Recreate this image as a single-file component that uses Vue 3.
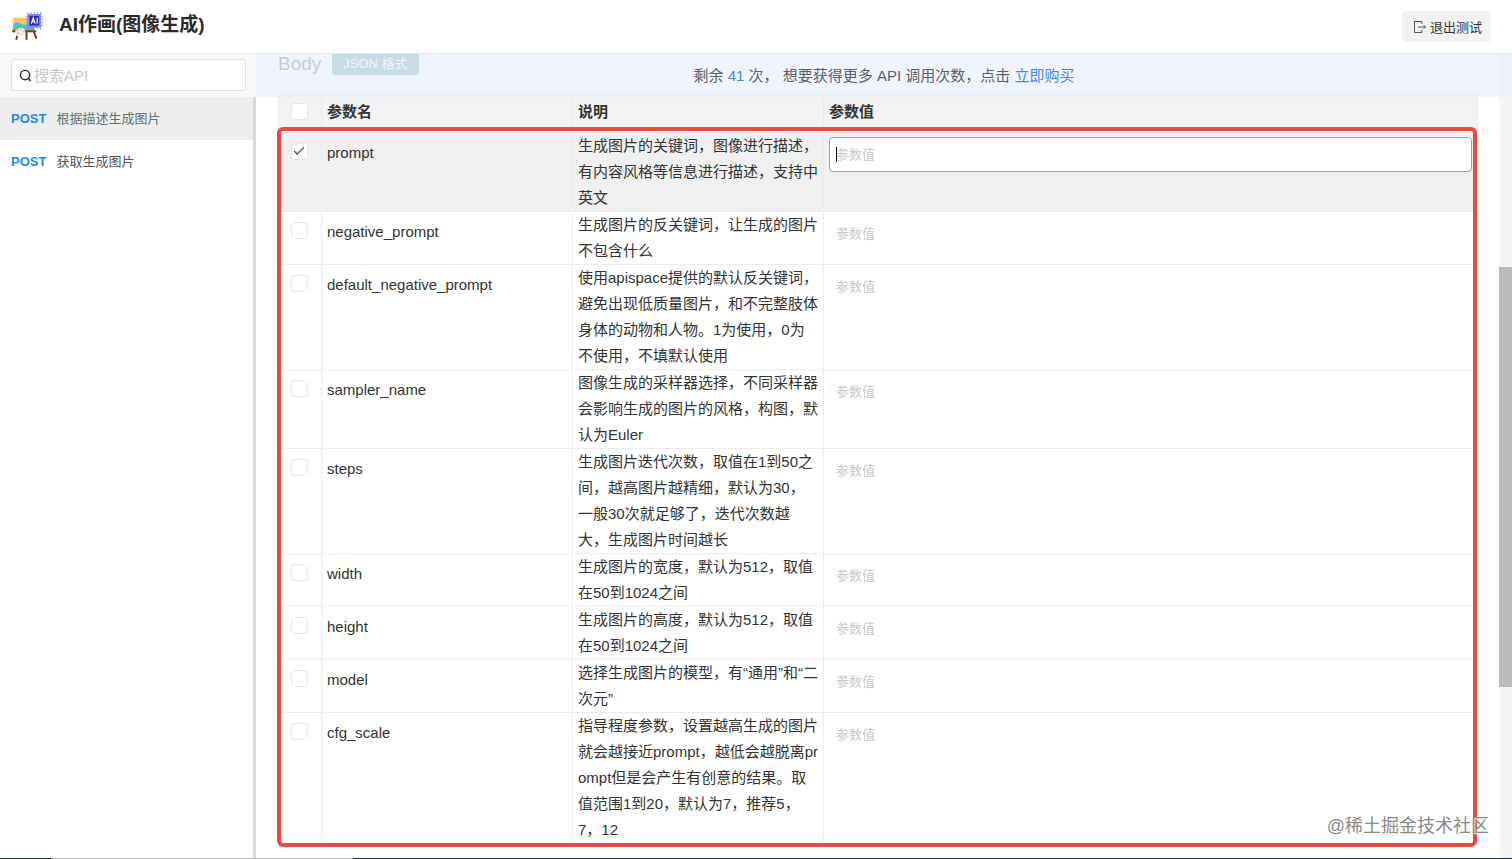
<script setup>
import { ref } from 'vue'

const keyword = ref('')

const apis = [
  { method: 'POST', name: '根据描述生成图片', active: true },
  { method: 'POST', name: '获取生成图片', active: false },
]

const params = ref([
  { name: 'prompt', desc: '生成图片的关键词，图像进行描述，有内容风格等信息进行描述，支持中英文', checked: true, value: '' },
  { name: 'negative_prompt', desc: '生成图片的反关键词，让生成的图片不包含什么', checked: false, value: '' },
  { name: 'default_negative_prompt', desc: '使用apispace提供的默认反关键词，避免出现低质量图片，和不完整肢体身体的动物和人物。1为使用，0为不使用，不填默认使用', checked: false, value: '' },
  { name: 'sampler_name', desc: '图像生成的采样器选择，不同采样器会影响生成的图片的风格，构图，默认为Euler', checked: false, value: '' },
  { name: 'steps', desc: '生成图片迭代次数，取值在1到50之间，越高图片越精细，默认为30，一般30次就足够了，迭代次数越大，生成图片时间越长', checked: false, value: '' },
  { name: 'width', desc: '生成图片的宽度，默认为512，取值在50到1024之间', checked: false, value: '' },
  { name: 'height', desc: '生成图片的高度，默认为512，取值在50到1024之间', checked: false, value: '' },
  { name: 'model', desc: '选择生成图片的模型，有“通用”和“二次元”', checked: false, value: '' },
  { name: 'cfg_scale', desc: '指导程度参数，设置越高生成的图片就会越接近prompt，越低会越脱离prompt但是会产生有创意的结果。取值范围1到20，默认为7，推荐5，7，12', checked: false, value: '' },
])
</script>

<template>
  <div class="app">
    <header class="topbar">
      <svg class="logo" viewBox="0 0 32 30" aria-hidden="true">
        <path d="M7 19 4.500 28M22 19l3 8M15 19v9" stroke="#713a25" stroke-width="2" stroke-linecap="round" />
        <rect x="1" y="6" width="22" height="14" fill="#ffc65c" />
        <path d="M1 13q4-4 8-1t8-1l6-1v10H1z" fill="#4fb9e8" />
        <path d="M1 17q5-3 10 0t12-2v5H1z" fill="#79bf4d" />
        <rect x="0" y="19" width="25" height="2" fill="#713a25" />
        <path d="M16.500 0v18M20 0v18M23 0v18M26 0v18M29.500 0v18M14 5h18M14 8h18M14 11h18M14 14h18" stroke="#8d98ea" stroke-width="1" />
        <rect x="16" y="2" width="14" height="14" rx="1" fill="#7c8bec" />
        <rect x="18" y="4" width="10" height="10" fill="#3030a5" />
        <path d="M20 12l2-6 2 6M20.500 10h3M26 6v6" fill="none" stroke="#fff" stroke-width="1.200" />
        <path d="M4 19q3-4 8-2 3 3 1 6-2 2-4 0l-1 2q-3 1-4-2-2-1 0-4z" fill="#f4eae7" />
        <circle cx="6" cy="19" r="0.800" fill="#e9a096" />
        <circle cx="9" cy="18" r="0.800" fill="#8fb8da" />
        <circle cx="12" cy="20" r="0.800" fill="#eab04e" />
        <circle cx="6" cy="22" r="0.800" fill="#a89bb0" />
      </svg>
      <h1>AI作画(图像生成)</h1>
      <button class="exit" type="button">
        <svg viewBox="0 0 14 14" aria-hidden="true">
          <path d="M9 4V1.500H1.500v11H9V10M5 7h7.500M10.500 5l2 2-2 2" />
        </svg>
        退出测试
      </button>
    </header>

    <div class="workspace">
      <aside class="sidebar">
        <label class="search">
          <svg viewBox="0 0 14 14" aria-hidden="true">
            <circle cx="6.500" cy="6.500" r="5" />
            <path d="m10 10 2.500 3" />
          </svg>
          <input v-model="keyword" type="text" placeholder="搜索API" aria-label="搜索API" />
        </label>
        <nav>
          <a v-for="api in apis" :key="api.name" href="#" :class="{ active: api.active }">
            <b>{{ api.method }}</b>{{ api.name }}
          </a>
        </nav>
      </aside>

      <main class="main">
        <div class="content">
          <div class="body-head">
            <h2>Body</h2>
            <span class="tag">JSON 格式</span>
          </div>
          <div class="table-wrap">
            <table>
              <colgroup>
                <col class="c-check" />
                <col class="c-text" />
                <col class="c-text" />
                <col />
              </colgroup>
              <thead>
                <tr>
                  <th class="check"><input type="checkbox" aria-label="全选" /></th>
                  <th>参数名</th>
                  <th>说明</th>
                  <th>参数值</th>
                </tr>
              </thead>
              <tbody>
                <tr v-for="(p, i) in params" :key="p.name" :class="{ current: i === 0 }">
                  <td class="check"><input :id="'check-' + p.name" v-model="p.checked" type="checkbox" :aria-label="p.name" /></td>
                  <td class="name"><label :for="'check-' + p.name">{{ p.name }}</label></td>
                  <td class="desc">{{ p.desc }}</td>
                  <td class="value">
                    <input v-model="p.value" type="text" placeholder="参数值" :aria-label="p.name + ' 参数值'" />
                    <i v-if="i === 0" class="caret"></i>
                  </td>
                </tr>
              </tbody>
            </table>
            <div class="highlight"></div>
          </div>
        </div>
        <div class="scrollbar"><span></span></div>
        <p class="quota">
          剩余 <em>41</em> 次，&nbsp;想要获得更多 API 调用次数，点击 <a href="#">立即购买</a>
        </p>
        <span class="watermark">@稀土掘金技术社区</span>
      </main>
    </div>
    <footer class="edge"><span></span></footer>
  </div>
</template>

<style>
body {
  margin: 0;
  background: #fff;
}
</style>

<style scoped>
.app {
  display: flex;
  flex-direction: column;
  height: 100vh;
  overflow: hidden;
  color: #333;
  background: #fff;
  font: 15px/26px "Liberation Sans", "Noto Sans CJK SC", sans-serif;
}

.app *,
.app *::before {
  box-sizing: border-box;
}

input,
button {
  font-family: inherit;
}

a {
  text-decoration: none;
}

.topbar {
  display: flex;
  flex: none;
  align-items: center;
  height: 54px;
  padding: 0 21px 0 12px;
  border-bottom: 1px solid #e8e8ea;
}

.logo {
  width: 31px;
  height: 29px;
  fill: none;
}

h1 {
  margin: 0 0 3px 16px;
  color: #2b2b2b;
  font-size: 19px;
  line-height: 28px;
}

.exit {
  display: flex;
  align-items: center;
  gap: 3px;
  height: 31px;
  margin-left: auto;
  padding: 0 9px 0 11px;
  border: 0;
  border-radius: 4px;
  background: #f2f2f2;
  color: #333;
  font-size: 13px;
}

.exit svg {
  width: 14px;
  height: 14px;
  fill: none;
  stroke: #555;
}

.workspace {
  display: flex;
  flex: 1;
  min-height: 0;
}

.sidebar {
  flex: none;
  width: 256px;
  background: linear-gradient(#dadada, #dadada) right 43px / 3px 100% no-repeat;
}

.search {
  position: relative;
  display: flex;
  height: 43px;
  padding: 5px 10px 6px 11px;
  background: #f7f8fa;
}

.search svg {
  position: absolute;
  top: 15px;
  left: 19px;
  width: 13px;
  height: 13px;
  fill: none;
  stroke: #222;
  stroke-width: 1.5;
}

.search input {
  width: 100%;
  padding: 0 8px 0 22px;
  border: 1px solid #dfe1e5;
  border-radius: 3px;
  outline: 0;
  background: #fff;
  font-size: 15px;
}

input::placeholder {
  color: #c6c8cb;
  opacity: 1;
}

nav {
  margin-right: 3px;
}

nav a {
  display: flex;
  align-items: center;
  gap: 10px;
  height: 43px;
  padding-left: 11px;
  color: #555;
  font-size: 13px;
}

nav a.active {
  background: #eee;
  color: #5b7278;
}

nav b {
  color: #1b8af2;
}

.main {
  position: relative;
  display: flex;
  flex: 1;
  min-width: 0;
  overflow: hidden;
}

.content {
  flex: 1;
  min-width: 0;
  padding: 0 21px 0 22px;
}

.body-head {
  display: flex;
  align-items: flex-start;
  gap: 11px;
  height: 37px;
}

h2 {
  margin: 0;
  color: #4a4a5c;
  font-size: 19px;
  font-weight: 400;
  line-height: 20px;
}

.tag {
  height: 21px;
  padding: 0 11px;
  border-radius: 0 0 3px 3px;
  background: #569696;
  color: #fff;
  font-size: 13px;
  line-height: 20px;
}

.table-wrap {
  position: relative;
}

table {
  width: 100%;
  border-spacing: 0;
  border-left: 1px solid #e8e8e8;
  table-layout: fixed;
}

.c-check {
  width: 43px;
}

.c-text {
  width: 251px;
}

th,
td {
  padding: 0 5px;
  border-right: 1px solid #ebebeb;
  border-bottom: 1px solid #ebebeb;
  text-align: left;
  vertical-align: top;
}

th {
  height: 42px;
  padding-top: 8px;
  background: #f3f3f3;
}

tbody tr:last-child td {
  border-bottom-color: transparent;
}

.current td {
  background: #f0f0f0;
}

.check {
  padding: 10px 0 0 12px;
  line-height: 0;
}

th.check {
  padding-top: 12px;
}

.check input {
  width: 17px;
  height: 17px;
  margin: 0;
  border: 1px solid #e6e6e6;
  border-radius: 3px;
  appearance: none;
  background: #fff;
}

.check input:checked::before {
  display: block;
  width: 10px;
  height: 5px;
  margin: 3px 0 0 2px;
  border-bottom: 1px solid #333;
  border-left: 1px solid #333;
  content: "";
  transform: rotate(-45deg);
}

.name {
  padding-top: 7px;
}

.desc {
  padding-right: 4px;
  word-break: break-all;
}

.value {
  position: relative;
  padding-top: 4px;
  line-height: 0;
}

.value input {
  width: 100%;
  height: 35px;
  padding: 0 7px 0 6px;
  border: 1px solid transparent;
  border-radius: 4px;
  outline: 0;
  background: transparent;
  font-size: 13px;
}

.current .value input {
  border-color: #6eabdc;
  background: #fff;
}

.caret {
  position: absolute;
  top: 14px;
  left: 12px;
  width: 1px;
  height: 15px;
  background: #111;
}

.highlight {
  position: absolute;
  inset: 36px 1px -3px -1px;
  border: 4px solid #ea4a43;
  border-radius: 6px;
  pointer-events: none;
}

.scrollbar {
  flex: none;
  width: 13px;
  padding-top: 213px;
  background: #f5f5f5;
}

.scrollbar span {
  display: block;
  height: 71%;
  background: #bbb;
}

.quota {
  position: absolute;
  inset: 0 0 auto;
  height: 43px;
  margin: 0;
  background: rgba(234, 241, 255, 0.77);
  color: #5a5f68;
  line-height: 43px;
  text-align: center;
}

.quota em,
.quota a {
  color: #4684ea;
  font-style: normal;
}

.watermark {
  position: absolute;
  right: 23px;
  bottom: 19px;
  color: #8a8a8a;
  font-size: 18px;
  text-shadow: 1px 1px 1px #fff;
}

.edge {
  flex: none;
  height: 1px;
  background: #1c2a33;
}

.edge span {
  display: block;
  width: 20%;
  height: 1px;
  margin-left: 51px;
  background: #b5b5b5;
}
</style>
